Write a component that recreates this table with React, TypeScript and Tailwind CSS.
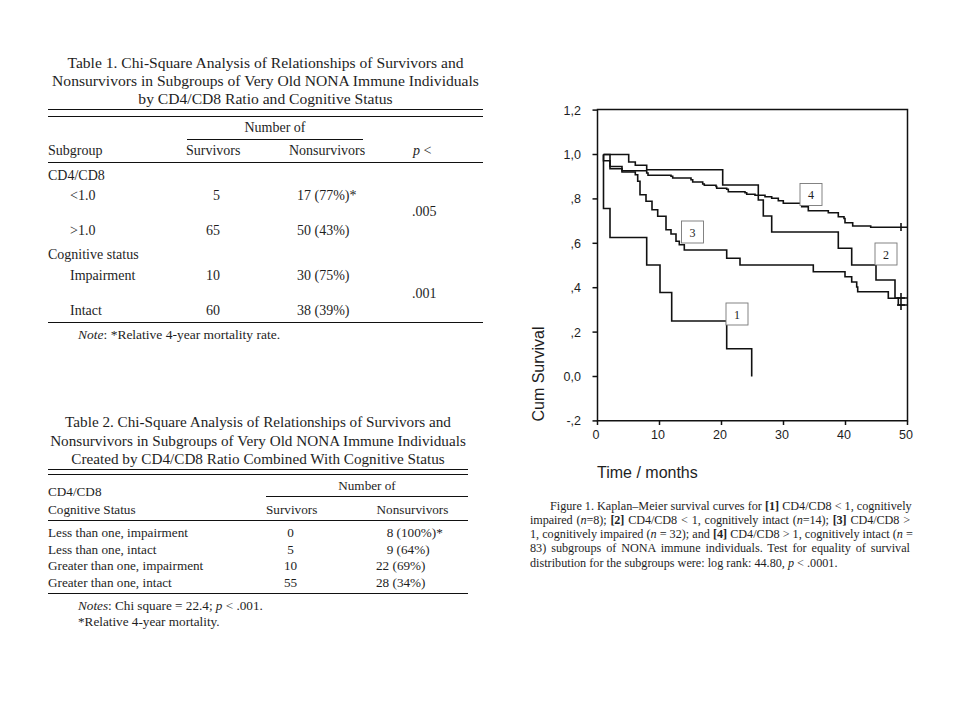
import React from 'react';

type Pt = [number, number];

// build a step path: horizontal to x, then vertical to y for each drop
function stepPath(start: Pt, drops: Pt[], endX?: number) {
  let d = `M${start[0]} ${start[1]}`;
  for (const [x, y] of drops) d += ` H${x} V${y}`;
  if (endX !== undefined) d += ` H${endX}`;
  return d;
}

const curve1 = stepPath(
  [603.5, 154.5],
  [
    [603.5, 208.5],
    [610, 237.5],
    [646.7, 265],
    [660, 292.5],
    [671.7, 321],
    [726.7, 348.7],
    [751.7, 376.5],
  ]
);

const curve2 = stepPath(
  [603.5, 154.5],
  [
    [628.7, 162],
    [635.3, 165.3],
    [646.7, 169.7],
    [722.7, 185],
    [758.3, 200],
    [763.3, 216],
    [771.7, 232],
    [838.3, 248.3],
    [851.7, 265],
    [876, 280],
    [895, 298],
  ],
  907.5
);

const curve3 = stepPath(
  [603.5, 154.5],
  [
    [603.5, 160.7],
    [610, 168.7],
    [622, 172],
    [635.3, 174.7],
    [637.7, 181.3],
    [640, 194.7],
    [646, 201.3],
    [652, 209.7],
    [657.7, 216.3],
    [666, 229.7],
    [671, 234],
    [676, 241.3],
    [679.3, 244.7],
    [684.3, 250],
    [726.7, 258.3],
    [740, 265],
    [813.3, 271.7],
    [845, 276.7],
    [851.7, 282],
    [856.7, 287],
    [857.7, 291.7],
    [888.3, 298.3],
    [898.3, 305],
  ],
  907.5
);

const curve4 = stepPath(
  [603.5, 154.5],
  [
    [610, 166.5],
    [622, 170.7],
    [646.7, 173],
    [648, 175.3],
    [671, 176.3],
    [672.7, 178],
    [691, 179.7],
    [692.7, 182],
    [702.7, 184],
    [704.3, 185.3],
    [716, 186.5],
    [716.7, 188.3],
    [726.7, 189.3],
    [728.3, 191.7],
    [745, 192.7],
    [746.7, 194.3],
    [755, 195.3],
    [765, 196.7],
    [771.7, 198.3],
    [778.3, 200.7],
    [783.3, 203.3],
    [801.7, 206.7],
    [808.3, 210.7],
    [828.3, 212.7],
    [838.3, 216.7],
    [844, 218.5],
    [845, 222.7],
    [852.7, 226],
    [870.7, 227.3],
  ],
  907.5
);

const yTicks: [string, number][] = [
  ['1,2', 110.1],
  ['1,0', 154.5],
  [',8', 198.9],
  [',6', 243.3],
  [',4', 287.7],
  [',2', 332.1],
  ['0,0', 376.5],
  ['-,2', 420.9],
];

const xTicks: [string, number][] = [
  ['0', 597.5],
  ['10', 659.5],
  ['20', 721.5],
  ['30', 783.5],
  ['40', 845.5],
  ['50', 907.5],
];

const boxes: { label: string; x: number; y: number }[] = [
  { label: '3', x: 681.5, y: 221 },
  { label: '4', x: 800, y: 183.5 },
  { label: '2', x: 875, y: 243 },
  { label: '1', x: 726, y: 303 },
];

function SurvivalChart() {
  return (
    <svg width={400} height={390} viewBox="520 100 400 390" className="block">
      <g fill="#1e1e1e" fontFamily="'Liberation Sans', Arial, sans-serif" fontSize={12.5}>
        {yTicks.map(([t, y]) => (
          <text key={t} x={581} y={y + 4.5} textAnchor="end">
            {t}
          </text>
        ))}
        {xTicks.map(([t, x]) => (
          <text key={t} x={x - 1.5} y={439} textAnchor="middle">
            {t}
          </text>
        ))}
        <text transform="translate(543.5 374) rotate(-90)" textAnchor="middle" fontSize={16}>
          Cum Survival
        </text>
        <text x={597} y={478.3} fontSize={16}>
          Time / months
        </text>
      </g>
      <g stroke="#111" strokeWidth={1.5} fill="none">
        <path d="M597.5 109.5 H907.5 V420.8 H597.5 Z" />
        {yTicks.map(([t, y]) => (
          <line key={t} x1={592.5} x2={597.5} y1={y} y2={y} />
        ))}
        {xTicks.map(([t, x]) => (
          <line key={t} x1={x} x2={x} y1={420.8} y2={425} />
        ))}
      </g>
      <g stroke="#111" strokeWidth={1.6} fill="none">
        <path d={curve1} />
        <path d={curve2} />
        <path d={curve3} />
        <path d={curve4} />
        <path d="M901 223 V231" />
        <path d="M901 293 V310 M897 298 H905 M897 305 H905" />
      </g>
      {boxes.map((b) => (
        <g key={b.label}>
          <rect x={b.x} y={b.y} width={22} height={22} fill="#fff" stroke="#777" strokeWidth={0.9} />
          <text
            x={b.x + 11}
            y={b.y + 15.5}
            textAnchor="middle"
            fontSize={12}
            fill="#222"
            fontFamily="'Liberation Serif', 'Times New Roman', serif"
          >
            {b.label}
          </text>
        </g>
      ))}
    </svg>
  );
}

function Table1() {
  return (
    <div className="w-[435px] text-[14px]">
      <div className="text-center text-[15.6px] leading-[18.3px] whitespace-nowrap">
        <div>Table 1. Chi-Square Analysis of Relationships of Survivors and</div>
        <div>Nonsurvivors in Subgroups of Very Old NONA Immune Individuals</div>
        <div>by CD4/CD8 Ratio and Cognitive Status</div>
      </div>
      <div className="mt-[0.8px] h-[7.5px] border-y-[1.5px] border-[#111]" />
      <div className="flex h-[23px]">
        <div className="ml-[138.7px] w-[176.6px] leading-[21px] text-center border-b-[1.3px] border-[#111]">
          Number of
        </div>
      </div>
      <div className="flex items-center h-[23.8px] border-b-[1.3px] border-[#111] leading-none">
        <span className="w-[138px]">Subgroup</span>
        <span className="w-[54px] text-center">Survivors</span>
        <span className="w-[49px]" />
        <span className="w-[76px] text-center">Nonsurvivors</span>
        <span className="ml-[48px]">
          <i>p</i> &lt;
        </span>
      </div>
      <div className="leading-none border-b-[1.3px] border-[#111] pb-[6px]">
        <div className="flex items-center h-[25px]">
          <span className="w-[135px]">CD4/CD8</span>
        </div>
        <div className="flex items-center h-[15px]">
          <span className="w-[135px] pl-[22px]">&lt;1.0</span>
          <span className="w-[37px] text-right">5</span>
          <span className="w-[77px]" />
          <span className="w-[115px]">17 (77%)*</span>
        </div>
        <div className="flex items-center h-[18px]">
          <span className="w-[364px]" />
          <span>.005</span>
        </div>
        <div className="flex items-center h-[19px]">
          <span className="w-[135px] pl-[22px]">&gt;1.0</span>
          <span className="w-[37px] text-right">65</span>
          <span className="w-[77px]" />
          <span className="w-[115px]">50 (43%)</span>
        </div>
        <div className="flex items-center h-[30px]">
          <span className="w-[135px]">Cognitive status</span>
        </div>
        <div className="flex items-center h-[12px]">
          <span className="w-[135px] pl-[22px]">Impairment</span>
          <span className="w-[37px] text-right">10</span>
          <span className="w-[77px]" />
          <span className="w-[115px]">30 (75%)</span>
        </div>
        <div className="flex items-center h-[23px]">
          <span className="w-[364px]" />
          <span>.001</span>
        </div>
        <div className="flex items-center h-[11px]">
          <span className="w-[135px] pl-[22px]">Intact</span>
          <span className="w-[37px] text-right">60</span>
          <span className="w-[77px]" />
          <span className="w-[115px]">38 (39%)</span>
        </div>
      </div>
      <div className="h-[23px] flex items-center pl-[30px] text-[13.5px]">
        <span>
          <i>Note</i>: *Relative 4-year mortality rate.
        </span>
      </div>
    </div>
  );
}

const table2Rows = [
  { label: 'Less than one, impairment', surv: '0', non: '8 (100%)*', pad: 'pl-[70.7px]' },
  { label: 'Less than one, intact', surv: '5', non: '9 (64%)', pad: 'pl-[70.7px]' },
  { label: 'Greater than one, impairment', surv: '10', non: '22 (69%)', pad: 'pl-[60px]' },
  { label: 'Greater than one, intact', surv: '55', non: '28 (34%)', pad: 'pl-[60px]' },
];

function Table2() {
  return (
    <div className="w-[420px] text-[13.2px] mt-[66.5px]">
      <div className="text-center text-[15.2px] leading-[18.65px] whitespace-nowrap">
        <div>Table 2. Chi-Square Analysis of Relationships of Survivors and</div>
        <div>Nonsurvivors in Subgroups of Very Old NONA Immune Individuals</div>
        <div>Created by CD4/CD8 Ratio Combined With Cognitive Status</div>
      </div>
      <div className="h-[6.5px] border-y-[1.5px] border-[#111]" />
      <div className="flex border-b-[1.3px] border-[#111]">
        <div className="w-[218px] pt-[8px] leading-[18px]">
          <div>CD4/CD8</div>
          <div>Cognitive Status</div>
        </div>
        <div className="w-[202px]">
          <div className="h-[21.5px] leading-[21px] text-center border-b-[1.3px] border-[#111]">Number of</div>
          <div className="flex items-center h-[23px] pt-[3px] leading-none">
            <span className="w-[51px] text-center">Survivors</span>
            <span className="w-[40px]" />
            <span className="w-[111px] text-center">Nonsurvivors</span>
          </div>
        </div>
      </div>
      <div className="pt-[3.5px] pb-[3px] border-b-[1.3px] border-[#111] leading-none">
        {table2Rows.map((r) => (
          <div key={r.label} className="flex items-center h-[16.5px]">
            <span className="w-[217px]">{r.label}</span>
            <span className="w-[51px] text-center">{r.surv}</span>
            <span className={r.pad}>{r.non}</span>
          </div>
        ))}
      </div>
      <div className="pt-[3.5px] pl-[30px] leading-[16px]">
        <div>
          <i>Notes</i>: Chi square = 22.4; <i>p</i> &lt; .001.
        </div>
        <div>*Relative 4-year mortality.</div>
      </div>
    </div>
  );
}

function Caption() {
  return (
    <div className="mt-[8.6px] ml-[10px] w-[380px] text-[12.2px] leading-[14.25px] whitespace-nowrap">
      <div className="pl-[20px] text-justify [text-align-last:justify]">
        Figure 1. Kaplan–Meier survival curves for <b>[1]</b> CD4/CD8 &lt; 1, cognitively
      </div>
      <div className="text-justify [text-align-last:justify] tracking-[-0.1px]">
        impaired (<i>n</i>=8); <b>[2]</b> CD4/CD8 &lt; 1, cognitively intact (<i>n</i>=14); <b>[3]</b> CD4/CD8 &gt;
      </div>
      <div className="text-justify [text-align-last:justify]">
        1, cognitively impaired (<i>n</i> = 32); and <b>[4]</b> CD4/CD8 &gt; 1, cognitively intact (<i>n</i> =
      </div>
      <div className="text-justify [text-align-last:justify]">
        83) subgroups of NONA immune individuals. Test for equality of survival
      </div>
      <div>
        distribution for the subgroups were: log rank: 44.80, <i>p</i> &lt; .0001.
      </div>
    </div>
  );
}

export default function App() {
  return (
    <div className="w-[960px] h-[720px] bg-white flex font-['Liberation_Serif','Times_New_Roman',serif] text-[#1e1e1e]">
      <div className="ml-[48px] w-[435px] pt-[53.5px] flex flex-col">
        <Table1 />
        <Table2 />
      </div>
      <div className="ml-[37px] w-[400px] pt-[100px]">
        <SurvivalChart />
        <Caption />
      </div>
    </div>
  );
}
